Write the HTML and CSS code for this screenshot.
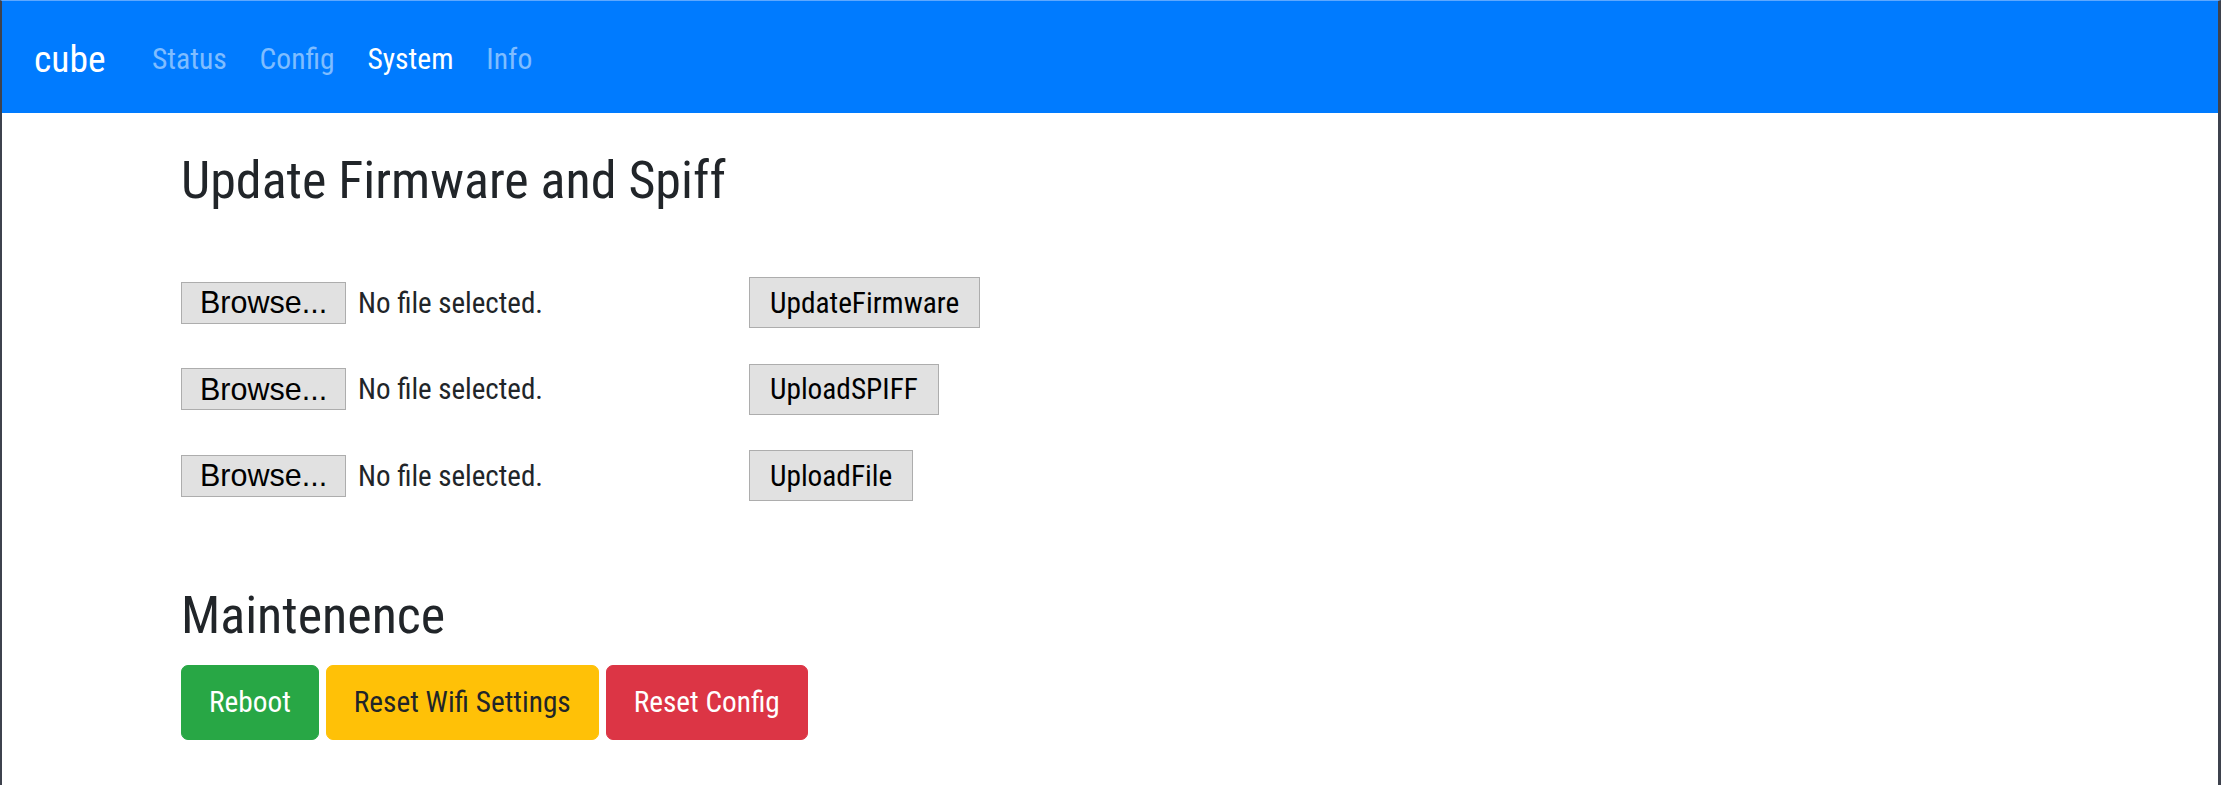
FILE: index.html
```html
<!DOCTYPE html>
<html lang="en">
<head>
<meta charset="utf-8">
<title>cube - System</title>
<link rel="stylesheet" href="styles.css">
</head>
<body>
<div class="frame">
  <nav class="navbar">
    <a class="brand" href="#">cube</a>
    <ul class="nav">
      <li><a class="nav-link" href="#">Status</a></li>
      <li><a class="nav-link" href="#">Config</a></li>
      <li><a class="nav-link active" href="#">System</a></li>
      <li><a class="nav-link" href="#">Info</a></li>
    </ul>
  </nav>
  <main class="container">
    <h3 class="title">Update Firmware and Spiff</h3>
    <div class="uploads">
      <form class="upload-row">
        <div class="file-input"><span class="browse">Browse...</span><span class="file-name">No file selected.</span></div>
        <button class="submit" type="button">UpdateFirmware</button>
      </form>
      <form class="upload-row">
        <div class="file-input"><span class="browse">Browse...</span><span class="file-name">No file selected.</span></div>
        <button class="submit" type="button">UploadSPIFF</button>
      </form>
      <form class="upload-row">
        <div class="file-input"><span class="browse">Browse...</span><span class="file-name">No file selected.</span></div>
        <button class="submit" type="button">UploadFile</button>
      </form>
    </div>
    <h3 class="title maint">Maintenence</h3>
    <div class="actions">
      <button class="btn btn-success" type="button">Reboot</button>
      <button class="btn btn-warning" type="button">Reset Wifi Settings</button>
      <button class="btn btn-danger" type="button">Reset Config</button>
    </div>
  </main>
</div>
</body>
</html>
```
FILE: styles.css
```css
html, body {
  margin: 0;
  padding: 0;
  background: #ffffff;
}

body {
  font-family: Roboto, "Liberation Sans", Arial, sans-serif;
  font-stretch: 75%;
  font-size: 29px;
  color: #212529;
}

.frame {
  box-sizing: border-box;
  height: 785px;
  border-left: 2px solid #3e424d;
  border-right: 3px solid #3e424d;
  border-top: 1px solid #5ea8ff;
  overflow: hidden;
}

.navbar {
  display: flex;
  align-items: center;
  box-sizing: border-box;
  height: 112px;
  padding: 5px 32px 0;
  background: #007bff;
}

.brand {
  font-size: 37.5px;
  line-height: 1.5;
  color: #ffffff;
  text-decoration: none;
  margin-right: 30px;
}

.nav {
  display: flex;
  list-style: none;
  margin: 0;
  padding: 0;
}

.nav-link {
  display: block;
  font-size: 29.6px;
  line-height: 1.5;
  padding: 0 16.4px;
  color: rgba(255, 255, 255, 0.5);
  text-decoration: none;
}

.nav-link.active {
  color: #ffffff;
}

.container {
  padding-left: 179px;
}

.title {
  font-size: 52px;
  font-weight: 400;
  line-height: 66px;
  margin: 35px 0 0;
  color: #212529;
}

.uploads {
  display: flex;
  flex-direction: column;
  gap: 35.5px;
  margin-top: 63px;
}

.upload-row {
  display: flex;
  align-items: center;
  height: 51px;
  margin: 0;
}

.file-input {
  display: flex;
  align-items: center;
  width: 568px;
}

.browse {
  box-sizing: border-box;
  display: flex;
  align-items: center;
  width: 165px;
  height: 42px;
  padding-left: 18px;
  font-family: "Liberation Sans", Arial, sans-serif;
  font-stretch: normal;
  font-size: 30.5px;
  color: #000000;
  background: #e1e1e1;
  border: 1px solid #adadad;
}

.file-name {
  margin-left: 12px;
  font-size: 29px;
  color: #212529;
}

.submit {
  box-sizing: border-box;
  height: 51px;
  padding: 0 20px;
  font-family: inherit;
  font-stretch: inherit;
  font-size: 29.3px;
  color: #000000;
  background: #e1e1e1;
  border: 1px solid #adadad;
  border-radius: 0;
}

.title.maint {
  margin-top: 82px;
  margin-bottom: 15.5px;
}

.actions {
  display: flex;
  gap: 7px;
}

.btn {
  box-sizing: border-box;
  height: 75px;
  padding: 0 27px;
  font-family: inherit;
  font-stretch: inherit;
  font-size: 29.3px;
  border: 1px solid transparent;
  border-radius: 7px;
  cursor: pointer;
}

.btn-success {
  color: #ffffff;
  background: #28a745;
  border-color: #28a745;
}

.btn-warning {
  color: #212529;
  background: #ffc107;
  border-color: #ffc107;
}

.btn-danger {
  color: #ffffff;
  background: #dc3545;
  border-color: #dc3545;
}
```
